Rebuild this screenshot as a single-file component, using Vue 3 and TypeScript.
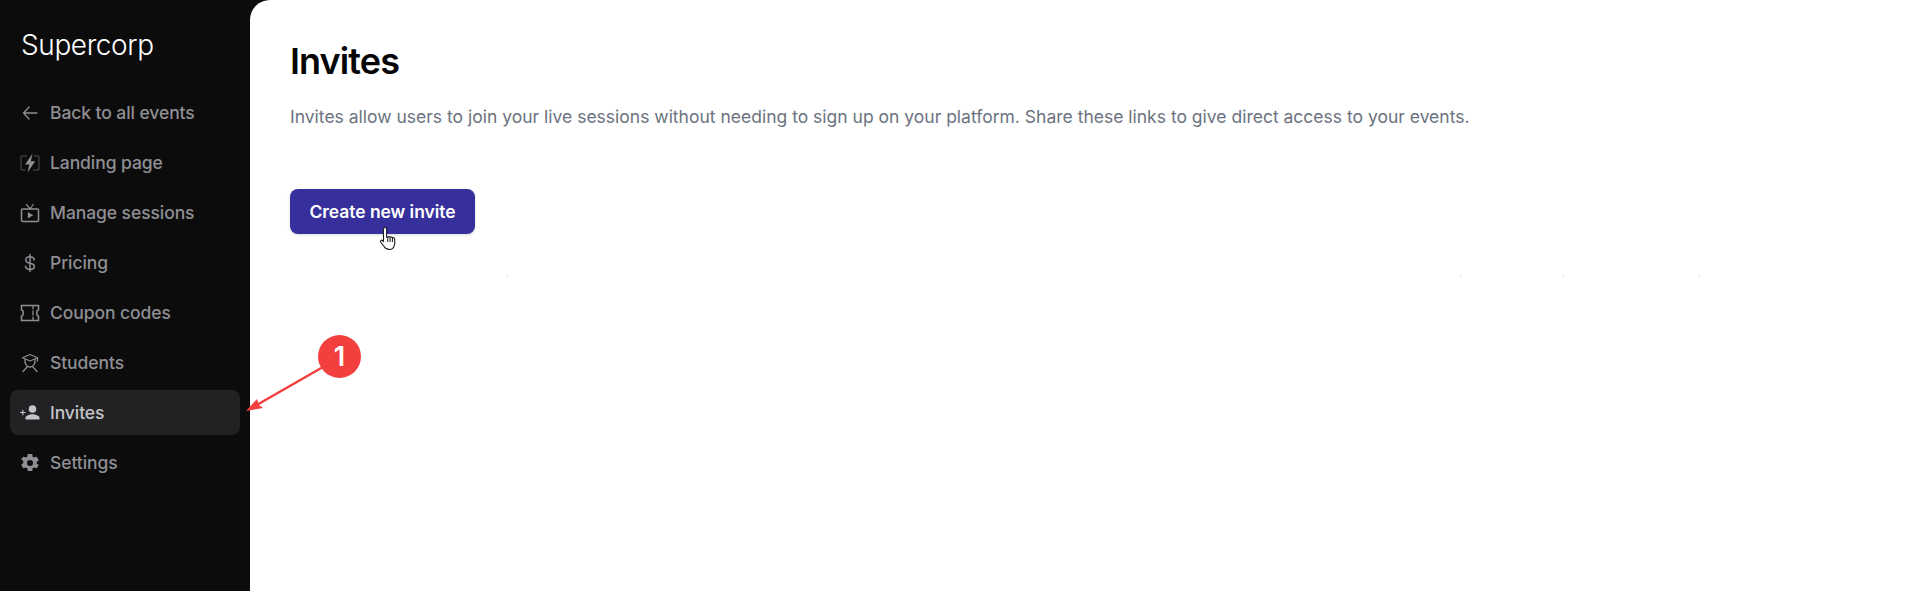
<script setup lang="ts">
const navItems = [
  { label: 'Back to all events', icon: 'back' },
  { label: 'Landing page', icon: 'landing' },
  { label: 'Manage sessions', icon: 'sessions' },
  { label: 'Pricing', icon: 'pricing' },
  { label: 'Coupon codes', icon: 'coupon' },
  { label: 'Students', icon: 'students' },
  { label: 'Invites', icon: 'invites', active: true },
  { label: 'Settings', icon: 'settings' },
]

const tickGaps = [258, 953, 103, 136]
</script>

<template>
  <div class="layout">
    <aside class="sidebar">
      <div class="brand">Supercorp</div>
      <nav class="nav">
        <a v-for="item in navItems" :key="item.label" :class="['nav-item', { active: item.active }]">
          <svg class="nav-icon" viewBox="0 0 20 20" fill="none" stroke="currentColor" stroke-width="1.3" stroke-linecap="round" stroke-linejoin="round">
            <template v-if="item.icon === 'back'">
              <path d="M17 10H3.500M9 4 3.500 10 9 16" />
            </template>
            <template v-else-if="item.icon === 'landing'">
              <path d="M6.500 3H2a1 1 0 0 0-1 1v12a1 1 0 0 0 1 1h3M14 3h4a1 1 0 0 1 1 1v12a1 1 0 0 1-1 1h-4.500" stroke-width="1" opacity=".55" />
              <path d="M12.500.8 5 11.500h4.300L7.500 19.500l7.700-11.300h-4.400z" fill="currentColor" stroke="none" />
            </template>
            <template v-else-if="item.icon === 'sessions'">
              <rect x="1.500" y="6" width="17" height="12.500" rx="1.200" stroke-width="1.500" />
              <path d="M6.500 1.500 10 5.800l3.300-4.300" stroke-width="1.200" />
              <path d="M7.800 9v6.500l5.400-3.200z" fill="currentColor" stroke="none" />
            </template>
            <template v-else-if="item.icon === 'pricing'">
              <path d="M14.200 7c0-1.900-1.800-3.200-4.200-3.200S5.800 5 5.800 6.900c0 4.600 8.600 2.300 8.600 6.500 0 1.900-1.900 3-4.400 3s-4.400-1.200-4.400-3.200M10 1.500v17" stroke-width="1.500" />
            </template>
            <template v-else-if="item.icon === 'coupon'">
              <path d="M1.500 2.500h17v4.300c-2.300.5-2.300 5.900 0 6.400v4.300h-17v-4.300c2.300-.5 2.300-5.900 0-6.400z" stroke-width="1.500" stroke-linejoin="miter" />
              <path d="M13 2.800v3M13 8v4M13 14.200v3" stroke-width="1.300" />
            </template>
            <template v-else-if="item.icon === 'students'">
              <path d="M10 1.500 2.500 4.800 10 8l7.500-3.200z" stroke-width="1.200" />
              <path d="M5 6.500c-.5 4 1.500 7.500 5 7.500s5.500-3.500 5-7.500M3 18.500l4.500-5M17 18.500l-4.500-5M17.500 5v3" stroke-width="1.300" />
            </template>
            <template v-else-if="item.icon === 'invites'">
              <circle cx="12.500" cy="6" r="3.800" fill="currentColor" stroke="none" />
              <path d="M5.500 16.500v-1.700c0-2.400 4.600-3.600 7-3.600s7 1.200 7 3.600v1.700z" fill="currentColor" stroke="none" />
              <path d="M.6 9.500h4.400M2.800 7.300v4.400" stroke-width="1.200" />
            </template>
            <template v-else>
              <path fill="currentColor" stroke="none" d="M16.700 10.900c0-.3.100-.6.100-.9s0-.6-.1-.9l1.900-1.500c.2-.1.200-.4.100-.6l-1.800-3.100c-.1-.2-.4-.3-.6-.2l-2.200.9c-.5-.4-1-.7-1.500-.9l-.3-2.400c-.1-.2-.3-.4-.5-.4H8.200c-.2 0-.4.200-.5.400l-.3 2.400c-.6.200-1.100.500-1.500.9l-2.200-.9c-.2-.1-.5 0-.6.200L1.300 6c-.1.200-.1.500.1.600l1.900 1.500c-.1.300-.1.600-.1.900s0 .6.100.9l-1.900 1.500c-.2.100-.2.400-.1.600l1.800 3.100c.1.200.4.300.6.200l2.200-.9c.5.400 1 .7 1.500.9l.3 2.400c.1.200.3.400.5.400h3.600c.2 0 .4-.2.500-.4l.3-2.400c.6-.2 1.100-.5 1.500-.9l2.200.9c.2.100.5 0 .6-.2l1.800-3.100c.1-.2.100-.5-.1-.6zM10 13a3 3 0 1 1 0-6 3 3 0 0 1 0 6z" />
            </template>
          </svg>
          <span>{{ item.label }}</span>
        </a>
      </nav>
    </aside>

    <main class="content">
      <h1 class="title">Invites</h1>
      <p class="description">
        Invites allow users to join your live sessions without needing to sign up on your platform. Share these links to give direct access to your events.
      </p>
      <button type="button" class="btn-create">Create new invite</button>
      <div class="ticks">
        <span v-for="(gap, i) in tickGaps" :key="i" class="tick" :style="{ width: gap + 'px' }"></span>
      </div>
    </main>

    <!-- annotation drawn over the page -->
    <svg class="arrow" width="100" height="70" viewBox="0 0 100 70" fill="none">
      <path d="M78 3 10 42" stroke="#f43f3f" stroke-width="2.500" />
      <path d="M1 47 12 35l2 6 4 3z" fill="#f43f3f" />
    </svg>
    <div class="badge">1</div>

    <svg class="cursor" width="20" height="26" viewBox="0 0 20 26">
      <path d="M6 1.500c1 0 1.600.7 1.600 1.700v8l1.200-.1c.6-.7 1.800-.6 2.300.2.700-.5 1.800-.3 2.200.5.900-.4 2-.1 2.300 1 .4 2.200.3 5.200-.5 7.300-.7 2-2 3.400-4.300 3.400-2.800 0-4.300-.7-5.800-3L1.600 16c-.6-1 .6-2.400 1.800-1.500l1.100 1V3.200C4.500 2.200 5 1.500 6 1.500z" fill="#fff" stroke="#1a1a1a" stroke-width="1.100" stroke-linejoin="round" />
      <path d="M8.800 11v5M11.100 11.400v4.600M13.400 12v4" stroke="#1a1a1a" stroke-width="1" fill="none" />
    </svg>
  </div>
</template>

<style>
html,
body {
  margin: 0;
  background: #0c0c0c;
}
</style>

<style scoped>
.layout {
  position: relative;
  display: flex;
  height: 591px;
  overflow: hidden;
  background: #0c0c0c;
  font-family: Inter, 'Liberation Sans', sans-serif;
}

.sidebar {
  width: 250px;
  flex-shrink: 0;
  padding: 24px 10px 0;
  box-sizing: border-box;
}

.brand {
  padding-left: 11px;
  font-size: 28px;
  font-weight: 300;
  line-height: 42px;
  letter-spacing: -0.4px;
  color: #fff;
}

.nav {
  display: flex;
  flex-direction: column;
  gap: 5px;
  margin-top: 24px;
}

.nav-item {
  display: flex;
  align-items: center;
  gap: 10px;
  height: 45px;
  padding-left: 10px;
  border-radius: 8px;
  font-size: 17.5px;
  font-weight: 500;
  letter-spacing: -0.08px;
  color: #8f8f94;
}

.nav-item.active {
  background: #222225;
  color: #c4c4c8;
}

.nav-icon {
  width: 20px;
  height: 20px;
  flex-shrink: 0;
}

.content {
  flex: 1;
  padding: 36px 40px 0;
  background: #fff;
  border-top-left-radius: 20px;
}

.title {
  margin: 0;
  font-size: 36px;
  line-height: 51px;
  font-weight: 600;
  letter-spacing: -0.9px;
  color: #050505;
}

.description {
  margin: 18px 0 0;
  font-size: 17.5px;
  line-height: 24px;
  color: #6b7280;
}

.btn-create {
  display: block;
  width: 185px;
  height: 45px;
  margin-top: 60px;
  border: none;
  border-radius: 8px;
  background: #372f9b;
  box-shadow: 0 1px 3px rgba(0, 0, 0, 0.15);
  font-family: inherit;
  font-size: 17.5px;
  font-weight: 600;
  letter-spacing: -0.05px;
  color: #fff;
}

.ticks {
  display: flex;
  margin: 40px 0 0 -40px;
  height: 3px;
}

.tick {
  flex-shrink: 0;
  height: 3px;
  box-sizing: border-box;
  border-right: 1px solid #e2e2e2;
}

.arrow {
  position: absolute;
  left: 245px;
  top: 364px;
}

.badge {
  position: absolute;
  left: 318px;
  top: 335px;
  width: 43px;
  height: 43px;
  border-radius: 50%;
  background: #f43f3f;
  color: #fff;
  font-size: 27px;
  font-weight: 600;
  line-height: 43px;
  text-align: center;
}

.cursor {
  position: absolute;
  left: 379px;
  top: 226px;
}
</style>
